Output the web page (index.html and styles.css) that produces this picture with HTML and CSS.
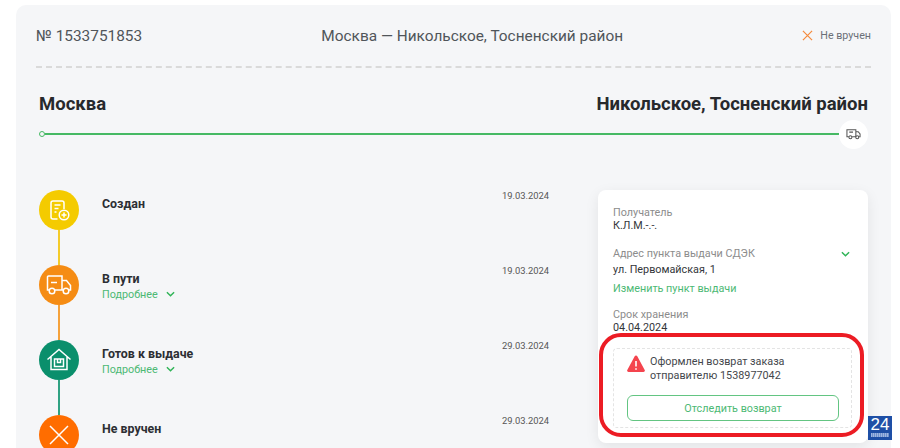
FILE: index.html
```html
<!DOCTYPE html>
<html lang="ru">
<head>
    <meta charset="UTF-8">
    <meta name="viewport" content="width=device-width, initial-scale=1.0">
    <title>Заказ 1533751853</title>
    <link rel="stylesheet" href="styles.css">
</head>
<body>
    <div class="order">
        <div class="order-head">
            <span class="order-number">№ 1533751853</span>
            <span class="order-route">Москва — Никольское, Тосненский район</span>
            <span class="order-status">
                <svg class="status-icon" viewBox="0 0 12 12"><path d="M1 1l10 10M11 1L1 11"/></svg>
                Не вручен
            </span>
        </div>

        <div class="cities">
            <span>Москва</span>
            <span>Никольское, Тосненский район</span>
        </div>

        <div class="track">
            <span class="track-start"></span>
            <span class="track-line"></span>
            <span class="track-end">
                <svg viewBox="0 0 16 12"><path d="M3 9H1V1.500h9.500V9M10.500 3.500h2.500l2 2.500v3h-1M10.500 9H6.500M3.500 4h4"/><circle cx="4.700" cy="9.500" r="1.600"/><circle cx="12" cy="9.500" r="1.600"/></svg>
            </span>
        </div>

        <div class="details">
            <div class="steps">
                <div class="step step-created">
                    <div class="step-dot">
                        <svg viewBox="0 0 24 24"><path d="M10.500 21H6a2 2 0 0 1-2-2V5a2 2 0 0 1 2-2h9a2 2 0 0 1 2 2v6M7.500 7h6M7.500 10.500h4M7.500 14h2"/><circle cx="17" cy="17" r="4.800"/><path d="M17 14.500v5M14.500 17h5"/></svg>
                    </div>
                    <div class="step-info">
                        <div class="step-title">Создан</div>
                    </div>
                    <div class="step-date">19.03.2024</div>
                </div>
                <div class="step step-way">
                    <div class="step-dot">
                        <svg class="icon-truck" viewBox="0 0 26 20"><path d="M3 15H1.500V2a1 1 0 0 1 1-1H16v14H9M16 5.500h4.500l4 5V15H23M16 15h1"/><path d="M5 7.500h6"/><circle cx="6" cy="16" r="2.800"/><circle cx="20" cy="16" r="2.800"/></svg>
                    </div>
                    <div class="step-info">
                        <div class="step-title">В пути</div>
                        <div class="step-more">Подробнее <svg class="chevron" viewBox="0 0 10 6"><path d="M1 1l4 4 4-4"/></svg></div>
                    </div>
                    <div class="step-date">19.03.2024</div>
                </div>
                <div class="step step-ready">
                    <div class="step-dot">
                        <svg viewBox="0 0 24 24"><path d="M.500 11.500L12 1.500l11.500 10M4 9v12.500h16V9"/><path d="M7.500 11h9v7.500h-9zM10.500 11v3.500h3V11"/></svg>
                    </div>
                    <div class="step-info">
                        <div class="step-title">Готов к выдаче</div>
                        <div class="step-more">Подробнее <svg class="chevron" viewBox="0 0 10 6"><path d="M1 1l4 4 4-4"/></svg></div>
                    </div>
                    <div class="step-date">29.03.2024</div>
                </div>
                <div class="step step-failed">
                    <div class="step-dot">
                        <svg viewBox="0 0 24 24"><path d="M3 3l18 18M21 3L3 21"/></svg>
                    </div>
                    <div class="step-info">
                        <div class="step-title">Не вручен</div>
                    </div>
                    <div class="step-date">29.03.2024</div>
                </div>
            </div>

            <div class="panel">
                <div class="panel-label">Получатель</div>
                <div class="panel-value">К.Л.М.-.-.</div>

                <div class="panel-label panel-label-address">
                    Адрес пункта выдачи СДЭК
                    <svg class="chevron" viewBox="0 0 10 6"><path d="M1 1l4 4 4-4"/></svg>
                </div>
                <div class="panel-value panel-value-address">ул. Первомайская, 1</div>
                <div class="panel-link">Изменить пункт выдачи</div>

                <div class="panel-label panel-label-term">Срок хранения</div>
                <div class="panel-value">04.04.2024</div>

                <div class="return">
                    <div class="return-text">
                        <svg class="return-icon" viewBox="0 0 18 18"><path d="M9 .5a1.500 1.500 0 0 1 1.300.8l7.400 13.600a1.500 1.500 0 0 1-1.300 2.200H1.600a1.500 1.500 0 0 1-1.300-2.200L7.700 1.300A1.500 1.500 0 0 1 9 .5z"/><path class="return-mark" d="M9 6v5.500M9 13.200v1.600"/></svg>
                        <span>Оформлен возврат заказа<br>отправителю 1538977042</span>
                    </div>
                    <button class="return-btn">Отследить возврат</button>
                </div>
            </div>
        </div>
    </div>

    <div class="highlight"></div>
    <div class="badge">24</div>
</body>
</html>
```

FILE: styles.css
```css
html, body {
    height: 100%;
    overflow: hidden;
}
body {
    font-family: Roboto, "Liberation Sans", sans-serif;
    background: white;
    margin: 0;
    padding: 5px 9px 0 16px;
    box-sizing: border-box;
    color: #333;
}
.order {
    background: #f5f6f8;
    border-radius: 10px 10px 0 0;
    padding: 0 20px;
    height: 443px;
    overflow: hidden;
}
.order-head {
    display: flex;
    align-items: center;
    justify-content: space-between;
    height: 61px;
    border-bottom: 2px dashed #dadada;
    font-size: 15.400px;
    color: #50555a;
}
.order-status {
    display: flex;
    align-items: center;
    gap: 7px;
    font-size: 10.700px;
    color: #6b7078;
}
.status-icon {
    width: 11px;
    height: 11px;
    fill: none;
    stroke: #f58a3c;
    stroke-width: 1.300;
}
.cities {
    display: flex;
    justify-content: space-between;
    padding: 25px 3px 0;
    font-size: 18.500px;
    line-height: 22px;
    font-weight: 700;
    color: #27292c;
}
.track {
    display: flex;
    align-items: center;
    height: 28px;
    margin: 5px 3px 0;
}
.track-start {
    width: 6px;
    height: 6px;
    box-sizing: border-box;
    border: 1px solid #46b964;
    border-radius: 50%;
}
.track-line {
    flex: 1;
    height: 2px;
    background: #46b964;
}
.track-end {
    display: flex;
    align-items: center;
    justify-content: center;
    width: 29px;
    height: 29px;
    background: white;
    border-radius: 50%;
}
.track-end svg {
    width: 15px;
    height: 12px;
    fill: none;
    stroke: #555;
    stroke-width: 1.100;
}
.details {
    display: flex;
    justify-content: space-between;
    align-items: flex-start;
    padding: 42px 3px 0;
}
.steps {
    width: 510px;
}
.step {
    display: flex;
    height: 75px;
    position: relative;
}
.step-dot {
    flex: none;
    display: flex;
    align-items: center;
    justify-content: center;
    width: 40px;
    height: 40px;
    border-radius: 50%;
    background: var(--step-color);
}
.step:not(:last-child)::before {
    content: "";
    position: absolute;
    left: 19px;
    top: 40px;
    width: 2px;
    height: 35px;
    background: var(--step-line);
}
.step-dot svg {
    width: 24px;
    height: 24px;
    fill: none;
    stroke: white;
    stroke-width: 1.500;
}
.step-dot .icon-truck {
    width: 26px;
    height: 20px;
}
.step-created {
    --step-color: #f4cb00;
    --step-line: #f4cb2a;
}
.step-way {
    --step-color: #f58c14;
    --step-line: #f5a23c;
}
.step-ready {
    --step-color: #0a8f6c;
    --step-line: #2fa283;
}
.step-failed {
    --step-color: #ff6d00;
}
.step-info {
    flex: 1;
    margin-left: 23px;
    padding-top: 6px;
}
.step-title {
    font-size: 12.400px;
    line-height: 16px;
    font-weight: 700;
    color: #2c2e33;
}
.step-more {
    font-size: 10.800px;
    line-height: 15px;
    color: #4cb974;
}
.chevron {
    width: 9px;
    height: 6px;
    margin-left: 6px;
    vertical-align: 1px;
    fill: none;
    stroke: #2fb457;
    stroke-width: 1.600;
}
.step-date {
    font-size: 9.400px;
    line-height: 12px;
    color: #555;
}
.panel {
    width: 270px;
    height: 253px;
    padding: 16px 16px 16px 15px;
    box-sizing: border-box;
    background: white;
    border-radius: 8px;
    box-shadow: 0 4px 14px rgba(0,0,0,0.08);
}
.panel-label {
    font-size: 10.800px;
    line-height: 13px;
    color: #8c8c8c;
}
.panel-label-address {
    display: flex;
    justify-content: space-between;
    align-items: center;
    margin-top: 14px;
}
.panel-label-address .chevron {
    margin-right: 2px;
}
.panel-label-term {
    margin-top: 13px;
}
.panel-value {
    font-size: 10.800px;
    line-height: 14px;
    color: #33363a;
}
.panel-value-address {
    margin-top: 3px;
}
.panel-link {
    margin-top: 5px;
    font-size: 10.800px;
    line-height: 13px;
    color: #4cb974;
}
.return {
    margin-top: 13px;
    padding: 6px 12px 6px 13px;
    height: 80px;
    box-sizing: border-box;
    border: 1px dashed #e4e4e4;
    border-radius: 4px;
}
.return-text {
    display: flex;
    gap: 5px;
    font-size: 10.800px;
    line-height: 14px;
    color: #44474c;
}
.return-icon {
    flex: none;
    width: 18px;
    height: 18px;
    fill: #f4444e;
}
.return-mark {
    fill: none;
    stroke: white;
    stroke-width: 1.600;
}
.return-btn {
    display: block;
    width: 100%;
    height: 26px;
    margin-top: 12px;
    background: white;
    border: 1px solid #63c582;
    border-radius: 6px;
    font-family: inherit;
    font-size: 10.800px;
    color: #4cb974;
}
.highlight {
    position: absolute;
    left: 599px;
    top: 333px;
    width: 265px;
    height: 104px;
    box-sizing: border-box;
    border: 4px solid #ec1c24;
    border-radius: 22px;
}
.badge {
    position: absolute;
    left: 868px;
    top: 416px;
    width: 24px;
    height: 24px;
    background: #1e4fa6;
    color: white;
    font-family: "Liberation Sans", sans-serif;
    font-size: 17px;
    line-height: 17px;
    text-align: center;
}
.badge::after {
    content: "";
    display: block;
    height: 4px;
    margin: 0 3px;
    background: repeating-linear-gradient(90deg, #9db6e0 0 1px, #6f90cc 1px 2px);
}
```
